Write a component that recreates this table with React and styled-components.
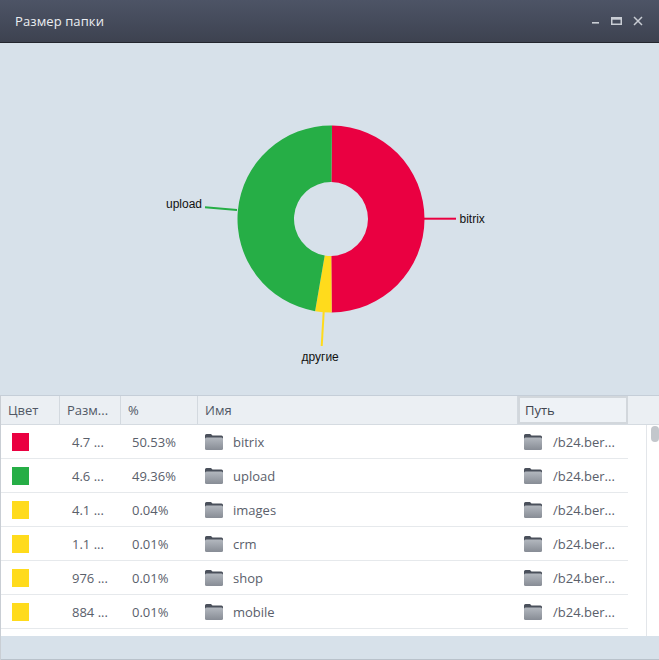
import React from "react";
import styled, { createGlobalStyle } from "styled-components";

const GlobalStyle = createGlobalStyle`
  html, body {
    margin: 0;
    padding: 0;
    background: #ffffff;
  }
  body {
    font-family: "Open Sans", "Noto Sans", sans-serif;
  }
`;

const rows = [
  { color: "#ea0041", size: "4.7 ...", pct: "50.53%", name: "bitrix" },
  { color: "#26ae46", size: "4.6 ...", pct: "49.36%", name: "upload" },
  { color: "#ffdb1c", size: "4.1 ...", pct: "0.04%", name: "images" },
  { color: "#ffdb1c", size: "1.1 ...", pct: "0.01%", name: "crm" },
  { color: "#ffdb1c", size: "976 ...", pct: "0.01%", name: "shop" },
  { color: "#ffdb1c", size: "884 ...", pct: "0.01%", name: "mobile" },
];

// annular sector, angles in degrees clockwise from top
const sector = (cx, cy, r1, r2, a0, a1) => {
  const pt = (r, a) => {
    const rad = (a * Math.PI) / 180;
    return [cx + r * Math.sin(rad), cy - r * Math.cos(rad)];
  };
  const large = a1 - a0 > 180 ? 1 : 0;
  const [x0, y0] = pt(r2, a0);
  const [x1, y1] = pt(r2, a1);
  const [x2, y2] = pt(r1, a1);
  const [x3, y3] = pt(r1, a0);
  return `M${x0} ${y0} A${r2} ${r2} 0 ${large} 1 ${x1} ${y1} L${x2} ${y2} A${r1} ${r1} 0 ${large} 0 ${x3} ${y3} Z`;
};

const FolderIcon = () => (
  <svg width="18" height="16" viewBox="0 0 18 16">
    <defs>
      <linearGradient id="fold" x1="0" y1="0" x2="0" y2="1">
        <stop offset="0" stopColor="#b3b8bf" />
        <stop offset="1" stopColor="#878c95" />
      </linearGradient>
    </defs>
    <path d="M0 1.5 Q0 0 1.5 0 H6 L7.5 1.5 H16.5 Q18 1.5 18 3 V5 H0 Z" fill="#4a505b" />
    <rect x="0" y="3.5" width="18" height="12.5" rx="1.5" fill="url(#fold)" />
  </svg>
);

const Donut = () => {
  const cx = 331;
  const cy = 219;
  return (
    <svg width="659" height="352" viewBox="0 43 659 352">
      <path d={sector(cx, cy, 37, 93.5, 0.6, 179.6)} fill="#ea0041" />
      <path d={sector(cx, cy, 37, 93.5, 179.6, 189.8)} fill="#ffdb1c" />
      <path d={sector(cx, cy, 37, 93.5, 189.8, 360.6)} fill="#26ae46" />
      <line x1="424" y1="218.7" x2="456" y2="218.7" stroke="#ea0041" strokeWidth="2" />
      <line x1="205" y1="207.3" x2="237" y2="210" stroke="#26ae46" strokeWidth="2" />
      <line x1="323.7" y1="312" x2="321.7" y2="346" stroke="#ffdb1c" strokeWidth="2" />
      <g fontFamily="'Liberation Sans', Arial, sans-serif" fontSize="12" fill="#111">
        <text x="459.5" y="222.7">bitrix</text>
        <text x="166" y="208">upload</text>
        <text x="301.5" y="360.7">другие</text>
      </g>
    </svg>
  );
};

const Window = styled.div`
  width: 659px;
  height: 660px;
  display: flex;
  flex-direction: column;
  overflow: hidden;
  background: #ffffff;
`;

const TitleBar = styled.div`
  height: 42px;
  flex: none;
  display: flex;
  align-items: center;
  justify-content: space-between;
  padding: 0 16px 0 15px;
  background: linear-gradient(#4d5466, #3d4250);
  border-bottom: 1px solid #23262e;
`;

const Title = styled.span`
  color: #eceef2;
  font-size: 13px;
  letter-spacing: 0.1px;
`;

const Controls = styled.div`
  display: flex;
  align-items: center;
  gap: 11px;
`;

const ChartArea = styled.div`
  height: 352px;
  flex: none;
  background: #d7e1ea;
  display: flex;
  svg {
    display: block;
  }
`;

const Table = styled.div`
  flex: 1;
  display: flex;
  flex-direction: column;
  border-top: 1px solid #c5ced8;
  border-left: 1px solid #c9ced4;
  min-height: 0;
`;

const cols = "59px 61px 77px 320px 110px 1fr";

const HeaderRow = styled.div`
  display: grid;
  grid-template-columns: ${cols};
  height: 28px;
  flex: none;
  background: #ebeff3;
  border-bottom: 1px solid #d5dbe1;
`;

const HeaderCell = styled.div`
  display: flex;
  align-items: center;
  padding-left: ${(p) => p.$pad || 7}px;
  font-size: 13px;
  color: #515866;
  border-right: ${(p) => (p.$last ? "none" : "1px solid #d3d9df")};
  box-sizing: border-box;
  white-space: nowrap;
  ${(p) =>
    p.$active &&
    `
    border: 2px solid #d2d7dc;
    background: #eef2f6;
    color: #3f4550;
  `}
`;

const Body = styled.div`
  flex: none;
  height: 211px;
  display: flex;
  background: #ffffff;
`;

const Rows = styled.div`
  width: 627px;
  display: flex;
  flex-direction: column;
`;

const Row = styled.div`
  display: grid;
  grid-template-columns: 59px 61px 77px 320px 110px;
  height: 33px;
  border-bottom: 1px solid #e6e9ec;
  font-size: 13px;
  color: #5a606b;
`;

const Cell = styled.div`
  display: flex;
  align-items: center;
  padding-left: ${(p) => p.$pad}px;
  gap: ${(p) => p.$gap || 0}px;
  white-space: nowrap;
`;

const Swatch = styled.span`
  width: 17px;
  height: 18px;
  background: ${(p) => p.$color};
`;

const ScrollZone = styled.div`
  flex: 1;
  display: flex;
  justify-content: flex-end;
`;

const ScrollTrack = styled.div`
  width: 13px;
  border-left: 1px solid #e3e6ea;
  padding: 1px 0 0 4px;
  box-sizing: border-box;
`;

const Thumb = styled.div`
  width: 8px;
  height: 16px;
  border-radius: 4px;
  background: #c3c7cc;
`;

const Footer = styled.div`
  flex: 1;
  background: #d7e1ea;
  border-bottom: 1px solid #b9c2cb;
`;

export default function App() {
  return (
    <>
      <GlobalStyle />
      <Window>
        <TitleBar>
          <Title>Размер папки</Title>
          <Controls>
            <svg width="9" height="10" viewBox="0 0 9 10">
              <rect x="1" y="6" width="7" height="1.6" fill="#c9cdd4" />
            </svg>
            <svg width="11" height="10" viewBox="0 0 11 10">
              <rect x="0.75" y="1.75" width="9.5" height="6.5" fill="none" stroke="#c9cdd4" strokeWidth="1.5" />
              <rect x="0.5" y="1.5" width="10" height="2.2" fill="#c9cdd4" />
            </svg>
            <svg width="10" height="10" viewBox="0 0 10 10">
              <path d="M1 1 L9 9 M9 1 L1 9" stroke="#c9cdd4" strokeWidth="1.5" />
            </svg>
          </Controls>
        </TitleBar>
        <ChartArea>
          <Donut />
        </ChartArea>
        <Table>
          <HeaderRow>
            <HeaderCell>Цвет</HeaderCell>
            <HeaderCell>Разм...</HeaderCell>
            <HeaderCell>%</HeaderCell>
            <HeaderCell>Имя</HeaderCell>
            <HeaderCell $active $pad={5}>Путь</HeaderCell>
            <HeaderCell $last />
          </HeaderRow>
          <Body>
            <Rows>
              {rows.map((r) => (
                <Row key={r.name}>
                  <Cell $pad={11}>
                    <Swatch $color={r.color} />
                  </Cell>
                  <Cell $pad={12}>{r.size}</Cell>
                  <Cell $pad={11}>{r.pct}</Cell>
                  <Cell $pad={7} $gap={10}>
                    <FolderIcon />
                    {r.name}
                  </Cell>
                  <Cell $pad={6} $gap={11}>
                    <FolderIcon />
                    /b24.ber...
                  </Cell>
                </Row>
              ))}
            </Rows>
            <ScrollZone>
              <ScrollTrack>
                <Thumb />
              </ScrollTrack>
            </ScrollZone>
          </Body>
          <Footer />
        </Table>
      </Window>
    </>
  );
}
